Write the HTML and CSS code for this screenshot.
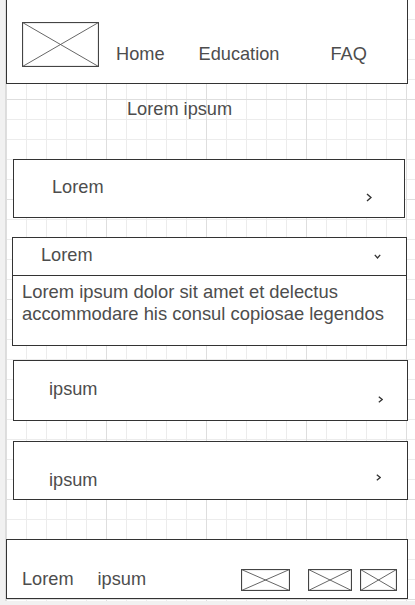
FILE: index.html
```html
<!DOCTYPE html>
<html lang="en">
<head>
<meta charset="utf-8">
<title>Mockup</title>
<link rel="stylesheet" href="styles.css">
</head>
<body>
<div class="canvas">
  <header class="topbar">
    <svg class="logo" width="77" height="45" viewBox="0 0 77 45">
      <rect x="0.5" y="0.5" width="76" height="44" fill="none" stroke="#444" stroke-width="1.2"/>
      <path d="M0.5 0.5 L76.5 44.5 M76.5 0.5 L0.5 44.5" stroke="#555" stroke-width="0.9" fill="none"/>
    </svg>
    <nav class="nav">
      <span class="nav-item nav-home">Home</span>
      <span class="nav-item nav-edu">Education</span>
      <span class="nav-item nav-faq">FAQ</span>
    </nav>
  </header>

  <div class="title">Lorem ipsum</div>

  <div class="card card-1">
    <span class="card-label">Lorem</span>
    <svg class="chev chev-1" width="6" height="9" viewBox="0 0 6 9"><polyline points="1,1 5,4.5 1,8" fill="none" stroke="#333" stroke-width="1.4"/></svg>
  </div>

  <div class="accordion">
    <div class="acc-head">
      <span class="card-label">Lorem</span>
      <svg class="chev chev-down" width="7" height="5" viewBox="0 0 7 5"><polyline points="0.8,0.8 3.5,4 6.2,0.8" fill="none" stroke="#333" stroke-width="1.3"/></svg>
    </div>
    <div class="acc-body">Lorem ipsum dolor sit amet et delectus accommodare his consul copiosae legendos</div>
  </div>

  <div class="card card-3">
    <span class="card-label">ipsum</span>
    <svg class="chev chev-3" width="5" height="7" viewBox="0 0 5 7"><polyline points="0.8,0.8 4.2,3.5 0.8,6.2" fill="none" stroke="#333" stroke-width="1.3"/></svg>
  </div>

  <div class="card card-4">
    <span class="card-label label-4">ipsum</span>
    <svg class="chev chev-4" width="5" height="7" viewBox="0 0 5 7"><polyline points="0.8,0.8 4.2,3.5 0.8,6.2" fill="none" stroke="#333" stroke-width="1.3"/></svg>
  </div>

  <footer class="footer">
    <span class="foot-text">Lorem</span>
    <span class="foot-text foot-second">ipsum</span>
    <div class="foot-icons">
      <svg class="ph" width="49" height="22" viewBox="0 0 49 22">
        <rect x="0.5" y="0.5" width="48" height="21" fill="none" stroke="#444" stroke-width="1.2"/>
        <path d="M0.5 0.5 L48.5 21.5 M48.5 0.5 L0.5 21.5" stroke="#555" stroke-width="0.9" fill="none"/>
      </svg>
      <svg class="ph ph-2" width="44" height="22" viewBox="0 0 44 22">
        <rect x="0.5" y="0.5" width="43" height="21" fill="none" stroke="#444" stroke-width="1.2"/>
        <path d="M0.5 0.5 L43.5 21.5 M43.5 0.5 L0.5 21.5" stroke="#555" stroke-width="0.9" fill="none"/>
      </svg>
      <svg class="ph ph-3" width="37" height="22" viewBox="0 0 37 22">
        <rect x="0.5" y="0.5" width="36" height="21" fill="none" stroke="#444" stroke-width="1.2"/>
        <path d="M0.5 0.5 L36.5 21.5 M36.5 0.5 L0.5 21.5" stroke="#555" stroke-width="0.9" fill="none"/>
      </svg>
    </div>
  </footer>
</div>
</body>
</html>
```

FILE: styles.css
```css
* { box-sizing: border-box; }

html, body {
  margin: 0;
  padding: 0;
}

body {
  background: #f1f1f1;
  font-family: "Liberation Sans", Arial, sans-serif;
  font-size: 18.2px;
  line-height: 20px;
  color: #4d4d4d;
  overflow: hidden;
}

.canvas {
  margin-left: 5px;
  width: 410px;
  height: 601px;
  border-left: 1px solid #dcdcdc;
  background-color: #ffffff;
  background-image:
    linear-gradient(to right, #dedede 1px, transparent 1px),
    linear-gradient(to bottom, #dedede 1px, transparent 1px),
    linear-gradient(to right, #ececec 1px, transparent 1px),
    linear-gradient(to bottom, #ececec 1px, transparent 1px);
  background-size: 100px 100px, 100px 100px, 20px 20px, 20px 20px;
  background-position: 0 0, 0 99px, 0 0, 0 19px;
  overflow: hidden;
}

svg { display: block; flex: none; }

/* header */
.topbar {
  width: 402px;
  height: 84px;
  background: #fff;
  border: 1px solid #333;
  border-top: 0;
  display: flex;
  align-items: flex-start;
  padding: 22px 0 0 15px;
}

.nav {
  display: flex;
  margin-top: 22px;
}

.nav-home { margin-left: 17px; }
.nav-edu { margin-left: 34px; }
.nav-faq { margin-left: 51px; }

.title {
  margin-top: 15px;
  padding-left: 121px;
}

/* cards */
.card {
  background: #fff;
  border: 1px solid #333;
  display: flex;
  align-items: flex-start;
  margin-left: 7px;
}

.chev { margin-left: auto; }

.card-1 {
  margin-top: 40px;
  width: 392px;
  height: 59px;
  padding: 17px 0 0 38px;
}
.chev-1 { margin-top: 16px; margin-right: 32px; }

.accordion {
  margin-top: 19px;
  margin-left: 6px;
  width: 395px;
  background: #fff;
  border: 1px solid #333;
}

.acc-head {
  height: 38px;
  border-bottom: 1px solid #333;
  display: flex;
  align-items: flex-start;
  padding: 7px 0 0 28px;
}
.chev-down { margin-top: 9px; margin-right: 25px; }

.acc-body {
  padding: 5px 9px 20px 9px;
  font-size: 18.4px;
  line-height: 22px;
}

.card-3 {
  margin-top: 14px;
  width: 395px;
  height: 61px;
  padding: 18px 0 0 35px;
}
.chev-3 { margin-top: 17px; margin-right: 24px; }

.card-4 {
  margin-top: 20px;
  width: 395px;
  height: 59px;
  padding: 0 0 0 35px;
}
.label-4 { margin-top: 28px; }
.chev-4 { margin-top: 32px; margin-right: 26px; }

/* footer */
.footer {
  margin-top: 39px;
  width: 402px;
  height: 60px;
  background: #fff;
  border: 1px solid #333;
  display: flex;
  align-items: flex-start;
  padding: 29px 0 0 15px;
}
.foot-second { margin-left: 24px; }

.foot-icons {
  margin-left: auto;
  margin-right: 10px;
  display: flex;
}
.ph-2 { margin-left: 18px; }
.ph-3 { margin-left: 8px; }
```
